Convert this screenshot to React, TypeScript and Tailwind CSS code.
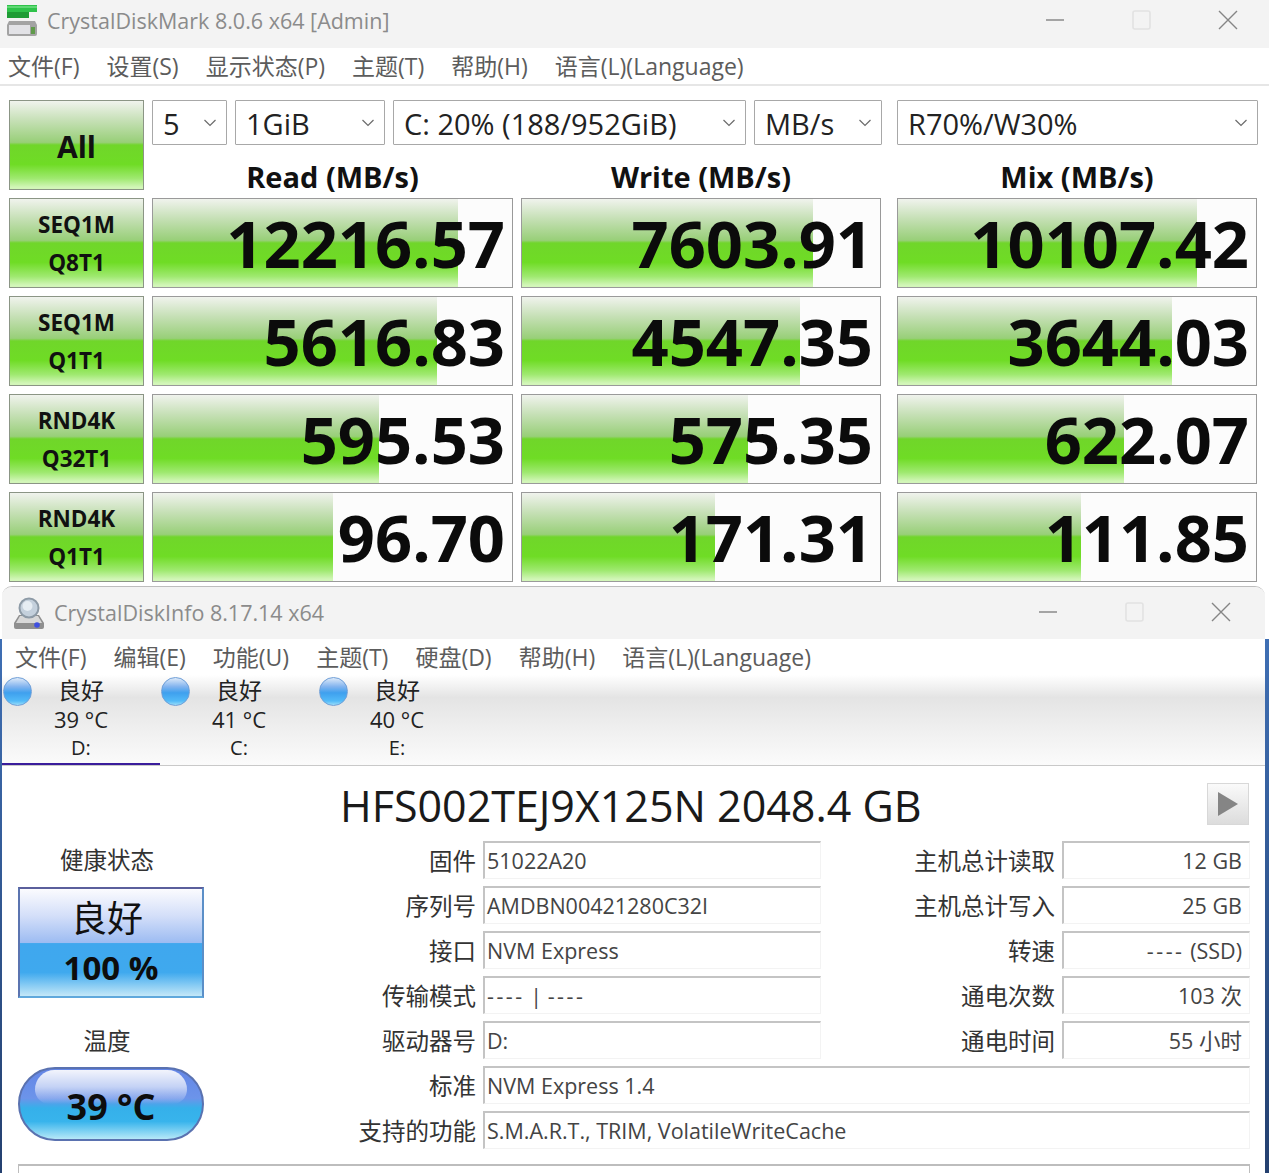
import React from 'react';

const latin = "font-['Open_Sans','Noto_Sans_CJK_SC',sans-serif]";
const barGreen =
  'bg-[linear-gradient(to_bottom,#f0f3ed_0%,#c6e0b6_22%,#98cf78_47%,#70d62a_50%,#6fdc25_72%,#9fe970_88%,#d2f6b8_98%)]';

// widths are the bar's share of the cell
const rows = [
  { a: 'SEQ1M', b: 'Q8T1', cells: [['12216.57', 85], ['7603.91', 81.2], ['10107.42', 83.6]] },
  { a: 'SEQ1M', b: 'Q1T1', cells: [['5616.83', 79.2], ['4547.35', 77.6], ['3644.03', 76.6]] },
  { a: 'RND4K', b: 'Q32T1', cells: [['595.53', 63], ['575.35', 63], ['622.07', 63.2]] },
  { a: 'RND4K', b: 'Q1T1', cells: [['96.70', 50], ['171.31', 54], ['111.85', 51]] },
];

const Chevron = () => (
  <svg className="w-[14px] h-[8px] shrink-0" viewBox="0 0 14 8" fill="none" stroke="#6b6b6b" strokeWidth="1.2">
    <path d="M1.5 1l5.5 5.5L12.5 1" />
  </svg>
);

const WinControls = ({ className }: { className: string }) => (
  <div className={`flex items-center ${className}`}>
    <svg className="w-5 h-5" viewBox="0 0 20 20" stroke="#8a8a8a" strokeWidth="1.5"><path d="M1 10h18" /></svg>
    <svg className="w-5 h-5 ml-[66px]" viewBox="0 0 20 20" fill="none" stroke="#e2e2e2" strokeWidth="1.6"><rect x="2" y="1" width="17" height="18" rx="2" /></svg>
    <svg className="w-5 h-5 ml-[67px]" viewBox="0 0 20 20" stroke="#858585" strokeWidth="1.4"><path d="M1 1l18 18M19 1L1 19" /></svg>
  </div>
);

const MarkLogo = () => (
  <svg className="w-[32px] h-[32px] shrink-0" viewBox="0 0 32 32">
    <rect x="1" y="0" width="30" height="7" fill="#2fc24a" />
    <rect x="1" y="1" width="30" height="2" fill="#5fd874" />
    <rect x="1" y="7" width="22" height="6" fill="#1f9c35" />
    <path d="M3 16h26l2 4v9a2 2 0 0 1-2 2H3a2 2 0 0 1-2-2v-9z" fill="#a3a3a3" />
    <rect x="3" y="20" width="21" height="9" fill="#e2e2e6" />
    <rect x="25" y="22" width="4" height="7" fill="#5f9a4a" />
  </svg>
);

const InfoLogo = () => (
  <svg className="w-[32px] h-[32px] shrink-0" viewBox="0 0 32 32">
    <path d="M6 18h20l5 8v4a2 2 0 0 1-2 2H3a2 2 0 0 1-2-2v-4z" fill="#8f8f8f" />
    <path d="M7 19h18l4 7H3z" fill="#d8d8d8" />
    <circle cx="16" cy="11" r="9.5" fill="#c4d0dc" stroke="#8d9aa6" strokeWidth="2" />
    <circle cx="14.5" cy="9" r="5" fill="#e6edf3" />
    <circle cx="24" cy="28" r="2.8" fill="#3f4fe0" />
  </svg>
);

const Select = ({ text, w }: { text: string; w: string }) => (
  <div className={`${w} h-[45px] flex items-center justify-between pl-[10px] pr-[9px] bg-white border border-[#a8a8a8] rounded-[1px]`}>
    <span className="pt-[2px] text-[29px] text-[#222]">{text}</span>
    <Chevron />
  </div>
);

const LeftButton = ({ children }: { children: React.ReactNode }) => (
  <div className={`w-[135px] shrink-0 pt-[2px] flex flex-col items-center justify-center border border-[#8b9585] ${barGreen}`}>
    {children}
  </div>
);

const ScoreCell = ({ value, pct, w }: { value: string; pct: number; w: string }) => (
  <div className={`${w} relative flex items-center justify-end pr-[7px] bg-[#fcfcfc] border border-[#9a9a9a] overflow-hidden`}>
    <div className={`absolute left-0 top-0 bottom-0 ${barGreen}`} style={{ width: `${pct}%` }} />
    <span className="relative text-[65px] font-bold leading-none text-[#0b0b0b]">{value}</span>
  </div>
);

// the dashes run wider in the original font
const Value = ({ text }: { text: string }) => {
  const parts = text.split('----');
  if (parts.length === 1) return <>{text}</>;
  return (
    <>
      {parts.map((part, i) => (
        <React.Fragment key={i}>
          {i > 0 && <span className="tracking-[2.5px]">----</span>}
          {part}
        </React.Fragment>
      ))}
    </>
  );
};

const InfoRow = ({ label, value, labelW, boxW, right }: { label: string; value: string; labelW: string; boxW: string; right?: boolean }) => (
  <div className="flex h-[38px]">
    <div className={`${labelW} pr-[7px] pt-[1px] text-right text-[23.5px] leading-[38px] text-[#333]`}>{label}</div>
    <div
      className={`${boxW} pl-[2px] text-[21.5px] leading-[36px] text-[#444] border-t-2 border-l-2 border-[#c4c4c4] border-b border-r border-b-[#f3f3f3] border-r-[#f3f3f3] ${right ? 'text-right pr-[7px]' : ''}`}
    >
      <Value text={value} />
    </div>
  </div>
);

const drives = [
  { temp: '39 °C', letter: 'D:', active: true },
  { temp: '41 °C', letter: 'C:', active: false },
  { temp: '40 °C', letter: 'E:', active: false },
];

const pairs = [
  ['固件', '51022A20', '主机总计读取', '12 GB'],
  ['序列号', 'AMDBN00421280C32I', '主机总计写入', '25 GB'],
  ['接口', 'NVM Express', '转速', '---- (SSD)'],
  ['传输模式', '---- | ----', '通电次数', '103 次'],
  ['驱动器号', 'D:', '通电时间', '55 小时'],
];

const DiskMark = () => (
  <div className="h-[586px] bg-white">
    <div className="h-[48px] bg-[#f3f3f3] flex items-center pb-[6px] pl-[6px] relative">
      <MarkLogo />
      <span className="ml-[9px] text-[21.5px] text-[#8b8b8b]">CrystalDiskMark 8.0.6 x64 [Admin]</span>
      <WinControls className="absolute right-[31px] top-[10px]" />
    </div>
    <div className="h-[38px] flex items-center gap-[27px] pl-[8px] border-b-2 border-[#e6e6e6] text-[23px] text-[#5c5c5c]">
      <span>文件(F)</span>
      <span>设置(S)</span>
      <span>显示状态(P)</span>
      <span>主题(T)</span>
      <span>帮助(H)</span>
      <span>语言(L)(Language)</span>
    </div>
    <div className="pl-[9px] pt-[14px] flex flex-col gap-[8px]">
      <div className="flex gap-[8px] h-[90px]">
        <LeftButton>
          <span className="text-[30px] font-bold text-[#111]">All</span>
        </LeftButton>
        <div>
          <div className="flex">
            <Select text="5" w="w-[75px]" />
            <Select text="1GiB" w="w-[150px] ml-[8px]" />
            <Select text="C: 20% (188/952GiB)" w="w-[353px] ml-[8px]" />
            <Select text="MB/s" w="w-[128px] ml-[8px]" />
            <Select text="R70%/W30%" w="w-[361px] ml-[15px]" />
          </div>
          <div className="flex mt-[12px] text-[29px] leading-[40px] font-bold text-[#111] text-center">
            <div className="w-[361px]">Read (MB/s)</div>
            <div className="w-[360px] ml-[8px]">Write (MB/s)</div>
            <div className="w-[360px] ml-[16px]">Mix (MB/s)</div>
          </div>
        </div>
      </div>
      {rows.map((r, i) => (
        <div key={i} className="flex gap-[8px] h-[90px]">
          <LeftButton>
            <span className="text-[22.5px] leading-[38px] font-bold text-[#111]">{r.a}</span>
            <span className="text-[22.5px] leading-[38px] font-bold text-[#111]">{r.b}</span>
          </LeftButton>
          <div className="flex">
            <ScoreCell value={r.cells[0][0] as string} pct={r.cells[0][1] as number} w="w-[361px]" />
            <ScoreCell value={r.cells[1][0] as string} pct={r.cells[1][1] as number} w="w-[360px] ml-[8px]" />
            <ScoreCell value={r.cells[2][0] as string} pct={r.cells[2][1] as number} w="w-[360px] ml-[16px]" />
          </div>
        </div>
      ))}
    </div>
  </div>
);

const DiskInfo = () => (
  <div className="h-[587px] bg-[linear-gradient(to_bottom,#ffffff_53px,#3f6fb4_53px,#24406f_100%)] pl-[2px] pr-[4px]">
    <div className="h-full bg-white rounded-t-[10px] border-t border-[#bdbdbd] overflow-hidden">
      <div className="h-[52px] bg-[#f3f3f3] flex items-center pl-[11px] relative">
        <InfoLogo />
        <span className="ml-[9px] text-[21.5px] text-[#8b8b8b]">CrystalDiskInfo 8.17.14 x64</span>
        <WinControls className="absolute right-[34px] top-[15px]" />
      </div>
      <div className="h-[36px] flex items-center gap-[27px] pl-[13px] text-[23px] text-[#5c5c5c]">
        <span>文件(F)</span>
        <span>编辑(E)</span>
        <span>功能(U)</span>
        <span>主题(T)</span>
        <span>硬盘(D)</span>
        <span>帮助(H)</span>
        <span>语言(L)(Language)</span>
      </div>
      <div className="h-[91px] flex border-b border-[#c9c9c9] bg-[linear-gradient(to_bottom,#ffffff_0%,#e4e4e4_25%,#efefef_60%,#fbfbfb_100%)]">
        {drives.map((d) => (
          <div key={d.letter} className={`w-[158px] h-[90px] relative flex flex-col items-center text-[#222] ${d.active ? 'border-b-2 border-[#3a1d9c]' : ''}`}>
            <div className="absolute left-[1px] top-[2px] w-[29px] h-[29px] rounded-full border border-[#6f9fd8] bg-[linear-gradient(to_bottom,#dde9f8_0%,#82b4ef_32%,#3fa0ee_55%,#52baf8_85%,#9adcf8_100%)]" />
            <span className="text-[23px] leading-[30px]">良好</span>
            <span className="text-[22px] leading-[28px]">{d.temp}</span>
            <span className="text-[20px] leading-[29px]">{d.letter}</span>
          </div>
        ))}
      </div>
      <div className="flex justify-between items-start pl-[338px] pr-[16px] pt-[17px] h-[75px]">
        <span className="text-[43px] leading-[46px] text-[#1a1a1a]">HFS002TEJ9X125N 2048.4 GB</span>
        <div className="w-[42px] h-[42px] flex items-center justify-center bg-[linear-gradient(to_bottom,#fafafa,#dcdcdc)] border border-[#d8d8d8]">
          <svg className="w-[20px] h-[24px]" viewBox="0 0 20 24"><path d="M0 0l20 12L0 24z" fill="#858585" /></svg>
        </div>
      </div>
      <div className="flex pl-[16px]">
        <div className="w-[186px] shrink-0 flex flex-col items-center text-[23.5px] text-[#333]">
          <span className="leading-[38px] pr-[8px]">健康状态</span>
          <div className="mt-[8px] w-full h-[111px] flex flex-col items-center border-2 border-t-[#5b5f9c] border-l-[#5b74b0] border-r-[#5b8fc8] border-b-[#5fa8dc] bg-[linear-gradient(to_bottom,#fbfbfe_0%,#d4dff9_25%,#9dbcf2_50%,#3fa7ee_51%,#3fa9ee_78%,#c4e8f8_100%)]">
            <span className="text-[36px] leading-[60px] text-[#111] pr-[8px]">良好</span>
            <span className="text-[33px] leading-[38px] font-bold text-[#0d0d0d]">100 %</span>
          </div>
          <span className="mt-[24px] leading-[38px] pr-[8px]">温度</span>
          <div className="relative mt-[7px] w-full h-[74px] pt-[6px] flex items-center justify-center rounded-[37px] border-2 border-[#5a72b0] bg-[linear-gradient(to_bottom,#6486e6_0%,#6c94ea_42%,#35b0ea_56%,#38b4ec_75%,#b6e8f8_100%)]">
            <div className="absolute left-[15px] right-[15px] top-[1px] h-[34px] rounded-t-[24px] rounded-b-[18px] bg-[linear-gradient(to_bottom,#f2f4fc_0%,#c4d2f5_50%,#7fa8ee00_100%)]" />
            <span className="relative text-[36px] font-bold text-[#0d0d0d]">39 °C</span>
          </div>
        </div>
        <div className="flex flex-col gap-[7px]">
          {pairs.map((p) => (
            <div key={p[0]} className="flex">
              <InfoRow label={p[0]} value={p[1]} labelW="w-[279px]" boxW="w-[338px]" />
              <InfoRow label={p[2]} value={p[3]} labelW="w-[241px]" boxW="w-[188px]" right />
            </div>
          ))}
          <InfoRow label="标准" value="NVM Express 1.4" labelW="w-[279px]" boxW="w-[767px]" />
          <InfoRow label="支持的功能" value="S.M.A.R.T., TRIM, VolatileWriteCache" labelW="w-[279px]" boxW="w-[767px]" />
        </div>
      </div>
      <div className="ml-[16px] mr-[15px] mt-[15px] h-[20px] border-t-2 border-l border-r border-[#bdbdbd]" />
    </div>
  </div>
);

export default function App() {
  return (
    <div className={`w-[1269px] h-[1173px] overflow-hidden bg-white ${latin}`}>
      <DiskMark />
      <DiskInfo />
    </div>
  );
}
